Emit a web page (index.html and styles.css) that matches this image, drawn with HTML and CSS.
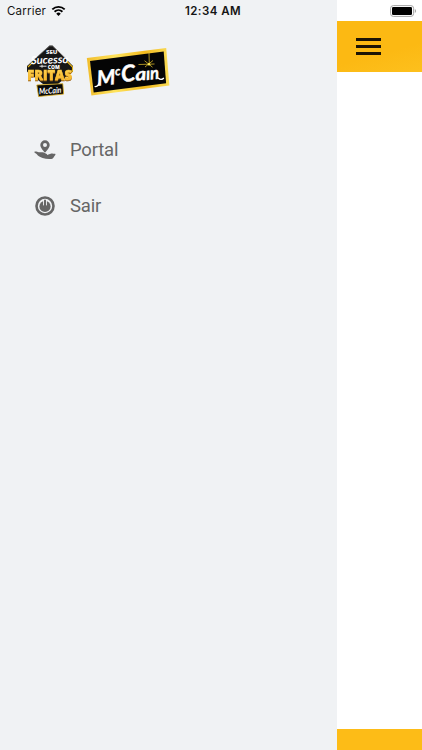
FILE: index.html
```
<!DOCTYPE html>
<html lang="pt-BR">
<head>
<meta charset="utf-8">
<meta name="viewport" content="width=device-width, initial-scale=1">
<title>McCain</title>
<link rel="stylesheet" href="styles.css">
</head>
<body>
<div class="app">
  <aside class="drawer">
    <div class="brands">
      <svg class="brand-fritas" viewBox="26 44 48 54" aria-label="Seu Sucesso com Fritas">
        <path d="M49.5 45.4h3L73 66v5.5L58 84H43L27 71.5V66z" fill="#171717"/>
        <path d="M34.5 59.2 49.7 46h2.6l15.5 14" fill="none" stroke="#8f8d86" stroke-width=".5"/>
        <path d="m28 67 5-5M28 72l5 5M67 61.5l5.5 5.5v4l-6 6" fill="none" stroke="#e6b51a" stroke-width="1.1"/>
        <text class="block" x="46" y="53.6" font-size="4.6" textLength="11.5" lengthAdjust="spacingAndGlyphs" fill="#eee">SEU</text>
        <text class="script" x="31" y="63.6" font-size="11" textLength="37.5" lengthAdjust="spacingAndGlyphs" fill="#fff" transform="rotate(-2 50 64)">Sucesso</text>
        <path d="M39.5 66.2h7M42 64.7v3" stroke="#e5e5e5" stroke-width="1"/>
        <text class="block" x="47.8" y="68.7" font-size="4.8" textLength="12" lengthAdjust="spacingAndGlyphs" fill="#fff">COM</text>
        <text class="block fries" x="27.2" y="79.6" font-size="14.3" textLength="44.8" lengthAdjust="spacingAndGlyphs" fill="url(#fries)" stroke="#ffc83b" stroke-width=".5">FRITAS</text>
        <path d="m36.8 85 26-1.3.8 10.4-25 2.4z" fill="#090909" stroke="#dcac1c" stroke-width=".8"/>
        <text class="script" x="39" y="93.6" font-size="8.5" textLength="22.5" lengthAdjust="spacingAndGlyphs" fill="#fff" transform="rotate(-4 50 91)">McCain</text>
        <defs><linearGradient id="fries" x2="0" y2="1"><stop stop-color="#ffe163"/><stop offset="1" stop-color="#f5a91d"/></linearGradient></defs>
      </svg>
      <svg class="brand-mccain" viewBox="86 47 84 50" aria-label="McCain">
        <defs><linearGradient id="gold"><stop stop-color="#f1bd2c"/><stop offset=".35" stop-color="#ffe45c"/><stop offset=".7" stop-color="#f2b91c"/><stop offset="1" stop-color="#f9dc58"/></linearGradient></defs>
        <path d="m86.8 58 79.4-10 3.2 37.4-78 10.2z" fill="url(#gold)"/>
        <path d="m90 61 73.7-9.4 2.4 31.6-72.4 9.4z" fill="#050505"/>
        <g transform="rotate(-5 128 78)" stroke="#fff" stroke-linecap="round" stroke-linejoin="round">
          <text class="script" x="97" y="83" font-size="21" textLength="18.5" lengthAdjust="spacingAndGlyphs" fill="#fff" stroke-width=".4">M</text>
          <text class="script" x="115.6" y="74.5" font-size="12" fill="#fff" stroke-width=".3">c</text>
          <text class="script" x="121.5" y="81.5" font-size="23" textLength="14" lengthAdjust="spacingAndGlyphs" fill="#fff" stroke-width=".5">C</text>
          <text class="script" x="135.5" y="81.5" font-size="17.5" textLength="11" lengthAdjust="spacingAndGlyphs" fill="#fff" stroke-width=".4">a</text>
          <text class="script" x="146.3" y="81.5" font-size="17.5" textLength="13" lengthAdjust="spacingAndGlyphs" fill="#fff" stroke-width=".4">ın</text>
          <path d="M99 80.5q-1.5 3.5-4.5 3.2M158.3 81q2 2.2 5 .4" fill="none" stroke-width="1.4"/>
        </g>
        <path d="m149 52.5.3 12M138.5 64.5l16-.5M144.5 60.7l8 6.5M153 60.5l-8 6.5" fill="none" stroke="#d5b529" stroke-width=".8"/>
        <circle cx="149" cy="64.2" r="1.2" fill="#ffed57"/>
      </svg>
    </div>
    <nav class="menu">
      <a class="menu-item">
        <svg class="menu-icon" viewBox="0 0 22 22" aria-hidden="true">
          <path fill-rule="evenodd" d="M11 1.3a4.7 4.7 0 0 0-4.7 4.6c0 3 4.7 7.7 4.7 7.7s4.7-4.7 4.7-7.7A4.7 4.7 0 0 0 11 1.3zm0 2.6a2 2 0 1 1 0 4 2 2 0 0 1 0-4z"/>
          <path d="M.6 12.6c1.6-.5 2.8.5 4.2.6 1.8.1 3.3-.4 4.9.4l3 1.4c.5.3.3.9.3.9l4.4-1.3c1.4-.4 1.9.2 3.3.1.8 0 1 .7.6 1.2-1.6 1.5-1.7 3.7-3.8 4-3.3.4-6.2-.1-8.9-1-2.4-.8-4.4-1.6-6-3.8L.4 13.4z"/>
        </svg>
        <span>Portal</span>
      </a>
      <a class="menu-item">
        <svg class="menu-icon" viewBox="0 0 22 22" aria-hidden="true">
          <circle cx="11" cy="11" r="8.5" fill="none" stroke="#666" stroke-width="2.6"/>
          <circle cx="11" cy="11.4" r="5.6"/>
          <path d="M9.5 4.8v5.6M12.5 4.8v5.6" stroke="#f0f2f4" stroke-width=".9"/>
          <path d="M11 4.7v6" stroke="#666" stroke-width="1.9"/>
        </svg>
        <span>Sair</span>
      </a>
    </nav>
  </aside>
  <main class="page">
    <header class="page-header">
      <div class="hamburger"><i></i><i></i><i></i></div>
    </header>
    <div class="page-body"></div>
    <footer class="page-footer"></footer>
  </main>
  <div class="status-bar">
    <div class="carrier">
      <span>Carrier</span>
      <svg class="wifi" viewBox="0 0 16 12" aria-hidden="true"><path d="M1.4 4.2a9.6 9.6 0 0 1 13.2 0M3.8 6.8a6.1 6.1 0 0 1 8.4 0" fill="none" stroke="#000" stroke-width="2"/><path d="M5.6 8.8a3.5 3.5 0 0 1 4.8 0L8 11.3z"/></svg>
    </div>
    <time class="clock">12:34 AM</time>
    <svg class="battery" viewBox="0 0 27 12" aria-hidden="true"><rect x=".6" y=".6" width="23" height="10.8" rx="2.7" fill="#fff" stroke="#a5a5a5"/><rect x="2" y="2" width="20" height="8" rx="1.3"/><path d="M24.8 4v4q1.3-.5 1.3-2t-1.3-2" fill="#a5a5a5"/></svg>
  </div>
</div>
</body>
</html>
```
FILE: styles.css
```
* { box-sizing: border-box; }
body { margin: 0; font-family: Inter, "Liberation Sans", sans-serif; }
.app { position: relative; display: flex; width: 422px; height: 750px; overflow: hidden; background: #fff; }
.drawer { width: 337px; background: #f0f2f4; }
.brands { display: flex; gap: 12px; padding: 44px 0 0 26px; height: 122px; }
.brand-fritas { width: 48px; height: 54px; overflow: visible; }
.brand-mccain { width: 84px; height: 50px; margin-top: 3px; overflow: visible; }
.block { font-family: "Open Sans", sans-serif; font-weight: 800; }
.fries { filter: drop-shadow(.6px 1px 0 #9b6112); }
.script { font-family: Lato, sans-serif; font-weight: 700; font-style: italic; }
.menu { display: flex; flex-direction: column; }
.menu-item { display: flex; align-items: center; gap: 14px; height: 56px; padding-left: 34px; color: #666; font-family: Roboto, sans-serif; font-size: 18.5px; letter-spacing: -.2px; }
.menu-icon { width: 22px; height: 22px; fill: #666; }
.page { display: flex; flex: 1; flex-direction: column; padding-top: 21px; }
.page-header { height: 50.5px; padding: 17px 0 0 19px; background: linear-gradient(165deg, #fcb913 60%, #fdc01d); }
.hamburger { display: flex; flex-direction: column; gap: 4px; width: 25px; }
.hamburger i { height: 3px; background: #1c1405; }
.page-body { flex: 1; }
.page-footer { height: 21px; background: #fdbc17; }
.status-bar { position: absolute; inset: 0 0 auto; display: grid; grid-template-columns: 1fr auto 1fr; align-items: center; height: 21px; padding: 0 5px 0 7px; font-size: 11.5px; color: #151515; }
.carrier { display: flex; align-items: center; gap: 5px; letter-spacing: .2px; }
.wifi { width: 15px; height: 12px; }
.clock { padding-left: 2px; font-weight: 600; letter-spacing: .45px; }
.battery { justify-self: end; width: 27px; height: 12px; }
```
